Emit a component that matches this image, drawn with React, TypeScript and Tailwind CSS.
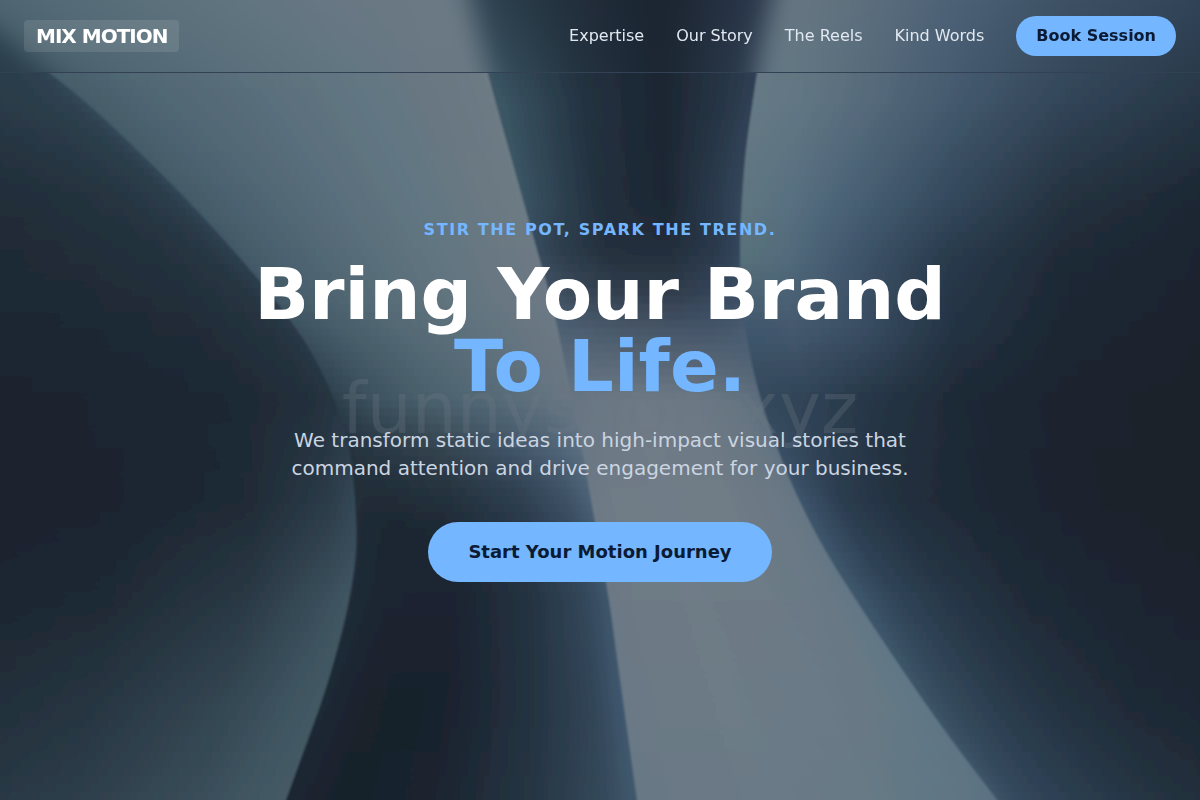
interface ColorRow {
  y: number;
  colors: string[];
}

interface Fold {
  id: string;
  left: number[];
  right: number[];
  stops: number[];
  rows: ColorRow[];
}

const BAND = 8;

// x position of every crease, one value for each 50 units of height
const creaseA = [-45, 20, 83, 137, 187, 233, 275, 310, 334, 349, 355, 356, 349, 337, 322, 304, 286];
const creaseB = [470, 482, 495, 509, 523, 537, 551, 562, 572, 582, 591, 600, 609, 616, 623, 630, 637];
const creaseC = [772, 761, 753, 746, 742, 740, 742, 749, 761, 778, 799, 825, 856, 889, 923, 959, 997];
const leftSide = creaseA.map(() => -120);
const rightSide = creaseA.map(() => 1260);

const row = (y: number, colors: string): ColorRow => ({ y, colors: colors.split(" ") });

const folds: Fold[] = [
  {
    id: "d",
    left: creaseC,
    right: rightSide,
    stops: [0, 0.09, 0.22, 0.4, 0.62, 0.9],
    rows: [
      row(0, "677783 647480 5a6c7c 4a5f75 3d5063 304257"),
      row(100, "667a86 627683 566b7b 43596d 324558 273645"),
      row(200, "5f7680 587081 486074 34495d 25323f 1c2733"),
      row(260, "587079 526a7b 3f556b 293a4b 1f2a37 1a242f"),
      row(330, "3f566c 44596e 3a4e63 243343 1c2732 1a222d"),
      row(400, "34485c 304356 263646 1e2935 1b232e 1a202b"),
      row(500, "3e556c 2c3d50 222f3d 1d2834 1a222d 1a202b"),
      row(600, "3f586c 31465a 283848 202c39 1c2632 1a222c"),
      row(700, "3c5467 33485a 2b3c4d 243240 1f2a37 1c2632"),
      row(800, "3e5468 33485c 2e4154 293a4a 253340 202c38"),
    ],
  },
  {
    id: "c",
    left: creaseB,
    right: creaseC,
    stops: [0, 0.12, 0.35, 0.65, 0.88, 1],
    rows: [
      row(0, "33485a 2b3d4a 222e3b 1c2530 273345 2f3c52"),
      row(100, "3d5866 334a59 233240 1c2632 273545 304054"),
      row(200, "3a5464 314756 22303d 1d2733 2a3a4c 34475c"),
      row(250, "35495c 2d3d4c 242f3c 232e3b 2a394b 33465c"),
      row(290, "3f5164 394958 313e4d 303c4b 34445a 3a4c61"),
      row(330, "4e6173 4c5d6f 485869 465568 45576b 485b70"),
      row(400, "667583 6a7784 6e7a85 6c7985 657481 5c6d7d"),
      row(500, "6d7985 6f7b86 707b87 6f7b86 6b7985 667684"),
      row(700, "6a7985 6c7a85 6d7b86 6b7a86 657985 5f7787"),
      row(800, "687885 6a7985 6b7a86 677a86 5f7685 5b7282"),
    ],
  },
  {
    id: "b",
    left: creaseA,
    right: creaseB,
    stops: [0, 0.15, 0.4, 0.7, 0.9, 1],
    rows: [
      row(0, "4a616d 526975 5c717c 677783 6b7984 6b7984"),
      row(100, "455c68 4f6572 586d7a 627783 6a7882 6d7b85"),
      row(200, "435a67 4c6270 586d7a 627783 6b7982 6d7b84"),
      row(300, "415865 4b616e 576d78 637680 6b7883 6d7a85"),
      row(400, "2c3f4c 3b505d 4a606d 566b78 637380 687682"),
      row(450, "25333f 2a3946 34444f 405467 506477 5b6f80"),
      row(490, "212d38 222e39 26333f 304153 405568 4d6378"),
      row(530, "202c37 1d2731 1f2a35 293848 364a5d 435970"),
      row(600, "202c38 1c2530 1b2430 253341 324659 3f566b"),
      row(700, "1f2a36 1a202c 19212d 253341 324557 405870"),
      row(800, "1c2732 19202c 1a232e 263543 34485a 42596d"),
    ],
  },
  {
    id: "a",
    left: leftSide,
    right: creaseA,
    stops: [0.14, 0.48, 0.78, 0.94, 1],
    rows: [
      row(0, "2a3d4b 2a3d4b 2a3d4b 2a3d4b 2a3d4b"),
      row(100, "263642 2a3a47 2c3e4c 2f4351 33495a"),
      row(200, "202c38 222e3a 263541 2b3c4a 304656"),
      row(300, "1e2833 1f2a35 222e3a 273541 2b3c4a"),
      row(400, "1b222d 1b2530 1e2934 232f3b 273542"),
      row(500, "1a202c 1b242f 202b36 2b3b48 344856"),
      row(600, "1c2530 1f2a35 2a3945 3a4e5b 405662"),
      row(700, "202b36 273541 334652 3f5561 435963"),
      row(800, "263541 2d3e4a 3a4d59 425863 455a66"),
    ],
  },
];

const xAt = (points: number[], y: number) => {
  const pos = y / 50;
  const i = Math.min(Math.max(Math.floor(pos), 0), points.length - 2);
  const t = pos - i;
  const p1 = points[i];
  const p2 = points[i + 1];
  if (t < 0 || t > 1) return p1 + (p2 - p1) * t;
  const p0 = points[i - 1] ?? 2 * p1 - p2;
  const p3 = points[i + 2] ?? 2 * p2 - p1;
  return (
    0.5 *
    (2 * p1 + (p2 - p0) * t + (2 * p0 - 5 * p1 + 4 * p2 - p3) * t * t + (3 * p1 - p0 - 3 * p2 + p3) * t * t * t)
  );
};

const mix = (a: string, b: string, t: number) => {
  const channel = (start: number) => {
    const from = parseInt(a.slice(start, start + 2), 16);
    const to = parseInt(b.slice(start, start + 2), 16);
    return Math.round(from + (to - from) * t);
  };
  return `rgb(${channel(0)}, ${channel(2)}, ${channel(4)})`;
};

const colorsAt = (rows: ColorRow[], y: number) => {
  const next = rows.findIndex((r) => r.y > y);
  const i = next === -1 ? rows.length - 2 : Math.max(next - 1, 0);
  const from = rows[i];
  const to = rows[i + 1];
  const t = Math.min(Math.max((y - from.y) / (to.y - from.y), 0), 1);
  return from.colors.map((color, k) => mix(color, to.colors[k], t));
};

// starts above the top edge so that the blurred copy stays solid there
const bands = Array.from({ length: 108 }, (_, i) => (i - 6) * BAND);

const Backdrop = ({ name }: { name: string }) => (
  <svg
    className="h-full w-full overflow-visible"
    viewBox="0 0 1200 800"
    preserveAspectRatio="xMidYMid slice"
    aria-hidden="true"
  >
    <defs>
      <filter id={`${name}-soften`} filterUnits="userSpaceOnUse" x="-60" y="-48" width="1320" height="864">
        <feGaussianBlur stdDeviation="1" />
      </filter>
    </defs>
    <g filter={`url(#${name}-soften)`}>
      {folds.map((fold) =>
        bands.map((y) => {
          const bottom = y + BAND + 1;
          const id = `${name}-${fold.id}${y}`;
          const middle = y + BAND / 2;
          const points = [
            `${xAt(fold.left, y) - 4},${y}`,
            `${xAt(fold.right, y)},${y}`,
            `${xAt(fold.right, bottom)},${bottom}`,
            `${xAt(fold.left, bottom) - 4},${bottom}`,
          ].join(" ");
          return (
            <g key={id}>
              <linearGradient
                id={id}
                gradientUnits="userSpaceOnUse"
                x1={xAt(fold.left, middle)}
                x2={xAt(fold.right, middle)}
                y1="0"
                y2="0"
              >
                {colorsAt(fold.rows, middle).map((color, k) => (
                  <stop key={k} offset={fold.stops[k]} stopColor={color} />
                ))}
              </linearGradient>
              <polygon points={points} fill={`url(#${id})`} />
            </g>
          );
        })
      )}
    </g>
  </svg>
);

const navItems = [
  { label: "Expertise", href: "#expertise" },
  { label: "Our Story", href: "#story" },
  { label: "The Reels", href: "#reels" },
  { label: "Kind Words", href: "#words" },
];

const Header = () => (
  <header className="fixed inset-x-0 top-0 z-20 border-b border-[#334155]">
    <div className="absolute inset-0 -z-10 overflow-hidden">
      <div className="h-screen blur-md">
        <Backdrop name="bar" />
      </div>
    </div>
    <div className="flex items-center justify-between px-6 py-4">
      <a href="#top" className="rounded bg-white/10 px-3 py-0.5 text-xl font-bold tracking-tighter text-white">
        MIX MOTION
      </a>
      <nav className="flex items-center gap-8 text-[#e2e8f0]">
        {navItems.map((item) => (
          <a key={item.href} href={item.href} className="hover:text-[#74b6ff]">
            {item.label}
          </a>
        ))}
        <button type="button" className="rounded-full bg-[#74b6ff] px-5 py-2 font-bold text-[#0b1b33]">
          Book Session
        </button>
      </nav>
    </div>
  </header>
);

const App = () => {
  return (
    <div id="top" className="relative min-h-screen overflow-hidden bg-[#1a202b] font-['DejaVu_Sans',sans-serif]">
      <div className="absolute inset-0">
        <Backdrop name="page" />
      </div>
      <div className="pointer-events-none absolute inset-0 flex items-center justify-center pt-4 text-[71px] leading-none text-[#6c7884]/30">
        funnyshop.xyz
      </div>

      <Header />

      <main className="relative flex min-h-screen flex-col items-center justify-center px-6 text-center">
        <p className="mb-4 font-bold tracking-widest text-[#74b6ff] uppercase">Stir the pot, spark the trend.</p>
        <h1 className="mb-6 text-7xl font-bold text-white">
          Bring Your Brand
          <br />
          <span className="text-[#74b6ff]">To Life.</span>
        </h1>
        <p className="mb-10 max-w-2xl text-xl text-[#cbd5e1]">
          We transform static ideas into high-impact visual stories that command attention and drive engagement for your
          business.
        </p>
        <button type="button" className="rounded-full bg-[#74b6ff] px-10 py-4 text-lg font-bold text-[#0b1b33]">
          Start Your Motion Journey
        </button>
      </main>
    </div>
  );
};

export default App;
